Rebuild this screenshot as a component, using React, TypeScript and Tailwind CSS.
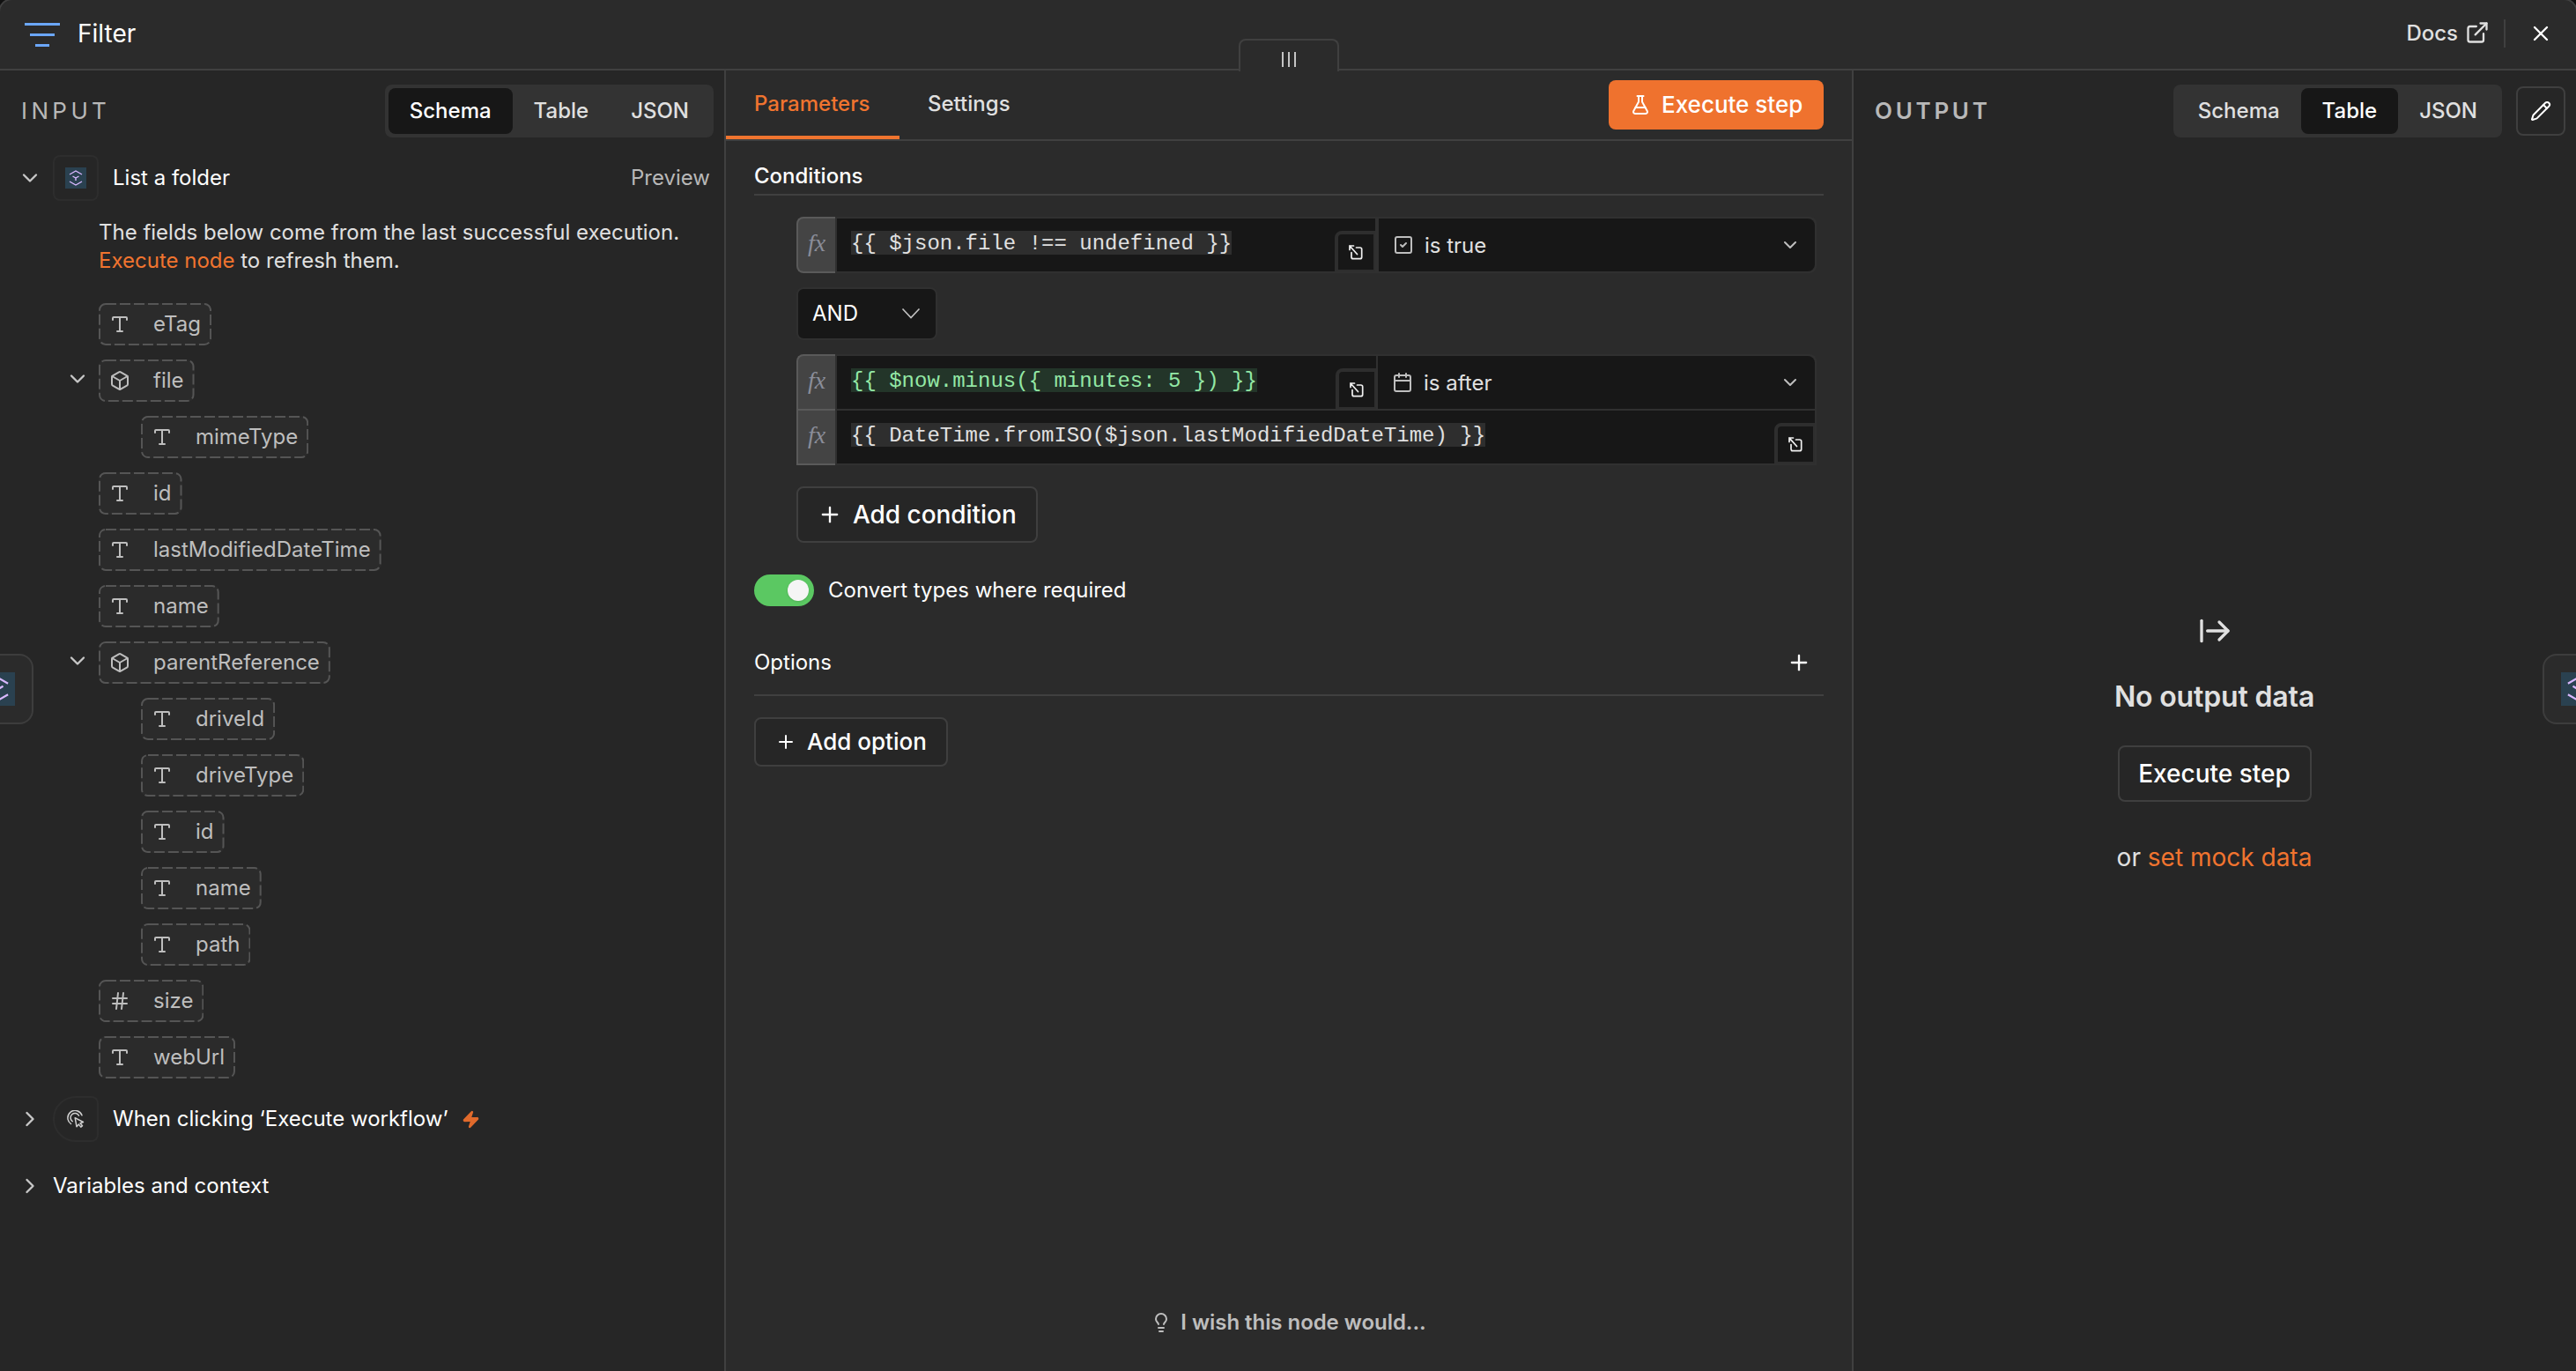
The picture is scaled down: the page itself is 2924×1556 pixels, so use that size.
import React from "react";
import {
  ArrowRightFromLine, Box, Calendar, ChevronDown, ChevronRight, ExternalLink, FlaskConical,
  Hash, Lightbulb, Pencil, Plus, SquareCheck, Type, X, Zap,
} from "lucide-react";

type FieldKind = "text" | "object" | "number";
type Field = { name: string; kind: FieldKind; children?: Field[] };

const FIELDS: Field[] = [
  { name: "eTag", kind: "text" },
  { name: "file", kind: "object", children: [{ name: "mimeType", kind: "text" }] },
  { name: "id", kind: "text" },
  { name: "lastModifiedDateTime", kind: "text" },
  { name: "name", kind: "text" },
  {
    name: "parentReference",
    kind: "object",
    children: [
      { name: "driveId", kind: "text" },
      { name: "driveType", kind: "text" },
      { name: "id", kind: "text" },
      { name: "name", kind: "text" },
      { name: "path", kind: "text" },
    ],
  },
  { name: "size", kind: "number" },
  { name: "webUrl", kind: "text" },
];

const KIND_ICON = { text: Type, object: Box, number: Hash };

function StorageIcon({ size }: { size: number }) {
  return (
    <svg width={size} height={size} viewBox="0 0 24 24" className="shrink-0" fill="none" stroke="#d9b8ff" strokeWidth="1.4">
      <rect width="24" height="24" fill="#2a4150" stroke="none" />
      <path d="M5 8 12 4l7 4M5 16l7 4 7-4M8.5 10l3.5 2 3.5-2M12 12v3" />
    </svg>
  );
}

function ClickIcon() {
  return (
    <svg width="20" height="20" viewBox="0 0 20 20" fill="none" stroke="#d0d0d0" strokeWidth="1.5" strokeLinejoin="round" strokeLinecap="round">
      <path d="M4.500 15.500A8.300 8.300 0 1 1 17 5.800" />
      <path d="M6.200 12.600A5 5 0 1 1 13.500 6.200" />
      <path d="m9.200 8.700 1.800 10 2.400-2.600 2.400 3 1.700-1.400-2.400-3 3.400-1.200z" />
    </svg>
  );
}

function ExpandIcon() {
  return (
    <svg width="16" height="17" viewBox="0 0 16 17" fill="none" stroke="currentColor" strokeWidth="1.7" strokeLinecap="round" strokeLinejoin="round">
      <path d="M1 5.500V1h4.500M1 1l8.500 9.500" />
      <path d="M8.500 3h4.200a2 2 0 0 1 2 2v8.700a2 2 0 0 1-2 2H5a2 2 0 0 1-2-2V8.500" />
    </svg>
  );
}

function Segmented({ active }: { active: string }) {
  return (
    <div className="flex h-[60px] items-center rounded-lg bg-[#333] p-1">
      {["Schema", "Table", "JSON"].map((label) => (
        <div
          key={label}
          className={`flex h-[52px] items-center rounded-lg px-6 font-medium ${label === active ? "bg-[#171717] text-white" : "text-[#e0e0e0]"}`}
        >
          {label}
        </div>
      ))}
    </div>
  );
}

function FieldRow({ field, nested = false }: { field: Field; nested?: boolean }) {
  const Icon = KIND_ICON[field.kind];
  return (
    <>
      <div className={`flex h-12 items-center ${nested ? "pl-[160px]" : "pl-[74px]"}`}>
        {!nested && (
          <span className="mr-2.5 flex w-7 justify-center">
            {field.children && <ChevronDown size={28} className="-mt-1 text-[#c8c8c8]" />}
          </span>
        )}
        <div className="relative flex h-12 items-center rounded-lg bg-[#2b2b2b] px-3 text-[#bebebe]">
          <svg className="absolute inset-0 size-full" fill="none" stroke="#555" strokeWidth="2" strokeDasharray="12 4">
            <rect x="1" y="1" rx="7" className="h-[calc(100%-2px)] w-[calc(100%-2px)]" />
          </svg>
          <Icon size={24} />
          <span className="ml-[26px]">{field.name}</span>
        </div>
      </div>
      {field.children?.map((child) => <FieldRow key={child.name} field={child} nested />)}
    </>
  );
}

function InputPanel() {
  return (
    <section className="flex w-[824px] shrink-0 flex-col border-r-2 border-[#404040] bg-[#262626]">
      <div className="mt-4 flex h-[60px] items-center justify-between pr-3 pl-6">
        <span className="-mt-0.5 text-[26px] tracking-[4.4px] text-[#b8b8b8]">INPUT</span>
        <Segmented active="Schema" />
      </div>
      <div className="mt-5 flex h-[52px] items-center pr-4 pl-5">
        <ChevronDown size={28} className="text-[#c8c8c8]" />
        <span className="ml-3 flex size-[52px] items-center justify-center rounded-lg border-2 border-[#2d2d2d]">
          <StorageIcon size={24} />
        </span>
        <span className="ml-4 text-white">List a folder</span>
        <span className="ml-auto text-[#b8b8b8]">Preview</span>
      </div>
      <p className="mt-5 pl-28 leading-8 text-[#e0e0e0]">
        The fields below come from the last successful execution.
        <br />
        <span className="text-[#f0742f]">Execute node</span> to refresh them.
      </p>
      <div className="mt-8 flex flex-col gap-4">
        {FIELDS.map((field) => <FieldRow key={field.name} field={field} />)}
      </div>
      <div className="mt-5 flex h-[52px] items-center pl-5 text-white">
        <ChevronRight size={28} className="text-[#c8c8c8]" />
        <span className="ml-3 flex size-[52px] items-center justify-center rounded-l-[26px] rounded-r-lg border-2 border-[#2d2d2d]">
          <ClickIcon />
        </span>
        <span className="ml-4">When clicking ‘Execute workflow’</span>
        <Zap size={21} className="ml-[15px] fill-[#e06a2c] text-[#e06a2c]" />
      </div>
      <div className="mt-6 flex h-[52px] items-center pl-5 text-white">
        <ChevronRight size={28} className="text-[#c8c8c8]" />
        <span className="ml-3">Variables and context</span>
      </div>
    </section>
  );
}

function FxBadge({ className = "" }: { className?: string }) {
  return (
    <span className={`flex w-11 shrink-0 items-center justify-center border-2 border-r-0 border-[#5a5a5a] bg-[#444] pb-[5px] font-['Liberation_Serif',serif] text-[28px] text-[#8a8d99] italic ${className}`}>
      fx
    </span>
  );
}

function ExpandButton() {
  return (
    <span className="absolute right-0 bottom-0 flex h-[46px] w-[46px] items-center justify-center rounded-tl-lg border-t-4 border-r-2 border-b-2 border-l-4 border-[#2e2e2e] bg-[#171717] text-[#f0f0f0]">
      <ExpandIcon />
    </span>
  );
}

function Expression({ text, valid = false, className = "" }: { text: string; valid?: boolean; className?: string }) {
  return (
    <div className={`relative h-[60px] bg-[#171717] pt-[14px] pl-4 ${className}`}>
      <span className={`block h-[27px] w-fit font-['Liberation_Mono',monospace] leading-[30px] whitespace-pre ${valid ? "bg-[#233529] text-[#93e8a5]" : "bg-[#2e2e2e] text-[#e0e0e0]"}`}>
        {text}
      </span>
      <ExpandButton />
    </div>
  );
}

function Operator({ icon: Icon, label, className = "" }: { icon: typeof Calendar; label: string; className?: string }) {
  return (
    <div className={`flex h-[60px] flex-1 items-center bg-[#171717] px-4 text-[#e0e0e0] ${className}`}>
      <Icon size={24} className="text-[#bebebe]" />
      <span className="mt-px ml-3">{label}</span>
      <ChevronDown size={24} className="ml-auto text-[#bebebe]" />
    </div>
  );
}

function Parameters() {
  return (
    <section className="relative flex w-[1278px] shrink-0 flex-col bg-[#2b2b2b]">
      <div className="absolute -top-9 left-[582px] flex h-[37px] w-[114px] items-end justify-center gap-[5px] rounded-t-lg border-2 border-b-0 border-[#404040] bg-[#2b2b2b] pb-[5px]">
        <i className="h-[17px] w-0.5 bg-[#c4c4c4]" />
        <i className="h-[17px] w-0.5 bg-[#c4c4c4]" />
        <i className="h-[17px] w-0.5 bg-[#c4c4c4]" />
      </div>
      <div className="flex h-20 items-start border-b-2 border-[#404040] pr-8 font-medium">
        <div className="flex h-[78px] w-[197px] items-center border-b-4 border-[#f0742f] pt-0.5 pl-8 text-[#f0742f]">Parameters</div>
        <div className="flex h-[74px] items-center pt-0.5 pl-8 text-[#e0e0e0]">Settings</div>
        <button className="mt-[11px] ml-auto flex h-14 w-[244px] items-center rounded-lg bg-[#ef722e] pl-6 text-[26px] text-white">
          <FlaskConical size={24} />
          <span className="-mt-px ml-3">Execute step</span>
        </button>
      </div>
      <div className="mx-8 flex flex-col">
        <div className="flex h-[62px] items-end border-b-2 border-[#404040] pb-0.5 font-medium text-white">Conditions</div>
        <div className="mt-6 ml-12 flex h-16 w-[1158px]">
          <FxBadge className="rounded-l-lg" />
          <div className="flex flex-1 gap-1 rounded-r-lg border-2 border-[#303030] bg-[#303030]">
            <Expression text="{{ $json.file !== undefined }}" className="w-[611px]" />
            <Operator icon={SquareCheck} label="is true" className="rounded-r-lg" />
          </div>
        </div>
        <div className="mt-4 ml-12 flex h-[60px] w-40 items-center justify-between rounded-lg border-2 border-[#303030] bg-[#171717] pr-[17px] pl-4 text-white">
          AND
          <svg width="22" height="14" viewBox="0 0 22 14" fill="none" stroke="#c4c4c4" strokeWidth="1.6"><path d="m1.500 1.500 9.500 10 9.500-10" /></svg>
        </div>
        <div className="mt-4 ml-12 w-[1158px]">
          <div className="flex h-[62px]">
            <FxBadge className="rounded-tl-lg border-b-0" />
            <div className="flex flex-1 gap-0.5 rounded-tr-lg border-2 border-b-0 border-[#303030] bg-[#303030]">
              <Expression text="{{ $now.minus({ minutes: 5 }) }}" valid className="w-[612px]" />
              <Operator icon={Calendar} label="is after" className="rounded-tr-lg" />
            </div>
          </div>
          <div className="flex h-16">
            <FxBadge />
            <div className="flex-1 border-2 border-[#303030]">
              <Expression text="{{ DateTime.fromISO($json.lastModifiedDateTime) }}" />
            </div>
          </div>
        </div>
        <button className="mt-6 ml-12 flex h-16 w-[274px] items-center rounded-lg border-2 border-[#3f3f3f] bg-[#262626] pl-[22px] text-[28px] font-medium text-white">
          <Plus size={28} />
          <span className="ml-3 tracking-[-0.05px]">Add condition</span>
        </button>
        <div className="mt-9 flex h-9 items-center text-white">
          <span className="flex h-9 w-[68px] items-center justify-end rounded-full bg-[#5bc862] pr-1.5">
            <i className="size-6 rounded-full bg-[#f5f5f5] shadow" />
          </span>
          <span className="ml-4">Convert types where required</span>
        </div>
        <div className="mt-7 flex h-[74px] items-center justify-between border-b-2 border-[#404040] pr-3.5 text-white">
          Options
          <Plus size={28} />
        </div>
        <button className="mt-6 flex h-14 w-[220px] items-center rounded-lg border-2 border-[#3f3f3f] bg-[#262626] pl-[22px] text-[26px] font-medium text-white">
          <Plus size={24} />
          <span className="-mt-px ml-3">Add option</span>
        </button>
      </div>
      <div className="mt-auto mb-[37px] flex items-center justify-center gap-2.5 pr-px font-semibold text-[#bebebe]">
        <Lightbulb size={24} />
        <span className="tracking-[-0.05px]">I wish this node would...</span>
      </div>
    </section>
  );
}

function OutputPanel() {
  return (
    <section className="flex flex-1 flex-col border-l-2 border-[#404040] bg-[#262626]">
      <div className="mt-4 flex h-[60px] items-center pr-3 pl-6">
        <span className="mr-auto -mt-0.5 text-[26px] font-semibold tracking-[3.7px] text-[#b8b8b8]">OUTPUT</span>
        <Segmented active="Table" />
        <span className="ml-4 flex size-14 items-center justify-center rounded-lg border-2 border-[#3f3f3f] text-white">
          <Pencil size={24} />
        </span>
      </div>
      <div className="mt-[540px] flex flex-col items-center pr-px text-[#e0e0e0]">
        <ArrowRightFromLine size={40} />
        <div className="mt-[33px] text-[32px] leading-[44px] font-semibold tracking-[-0.15px]">No output data</div>
        <button className="mt-[33px] flex h-16 w-[220px] items-center justify-center rounded-lg border-2 border-[#3f3f3f] text-[28px] font-medium text-white">Execute step</button>
        <div className="mt-11 text-[28px] leading-[38px]">
          or <span className="text-[#f0742f]">set mock data</span>
        </div>
      </div>
    </section>
  );
}

export default function App() {
  return (
    <div className="h-[1556px] w-[2924px] overflow-hidden bg-[#111] font-['Inter',sans-serif] text-[24px]">
      <div className="relative -mt-0.5 -ml-0.5 flex h-[1558px] w-[2928px] flex-col overflow-hidden rounded-t-2xl border-2 border-b-0 border-[#404040] bg-[#2b2b2b]">
        <header className="flex h-20 shrink-0 items-center border-b-2 border-[#404040] pr-[26px] pb-0.5 pl-7">
          <svg width="40" height="27" viewBox="0 0 40 27" fill="#6ba7fa" className="mt-[3px]">
            <path d="M0 0h40v3H0zM6 12h28v3H6zM12 24h16v3H12z" />
          </svg>
          <span className="ml-5 text-[28px] text-white">Filter</span>
          <span className="ml-auto font-medium text-[#e0e0e0]">Docs</span>
          <ExternalLink size={28} className="-mt-[3px] ml-2 text-[#e0e0e0]" />
          <span className="ml-4 h-8 w-0.5 bg-[#404040]" />
          <X size={28} className="ml-[26px] text-white" />
        </header>
        <main className="flex flex-1">
          <InputPanel />
          <Parameters />
          <OutputPanel />
        </main>
        <div className="absolute top-[742px] -left-[42px] flex h-20 w-20 items-center justify-center rounded-2xl border-2 border-[#3d3d3d] bg-[#2b2b2b]">
          <StorageIcon size={38} />
        </div>
        <div className="absolute top-[742px] left-[2886px] flex h-20 w-20 items-center justify-center rounded-2xl border-2 border-[#3d3d3d] bg-[#2b2b2b]">
          <StorageIcon size={38} />
        </div>
      </div>
    </div>
  );
}
